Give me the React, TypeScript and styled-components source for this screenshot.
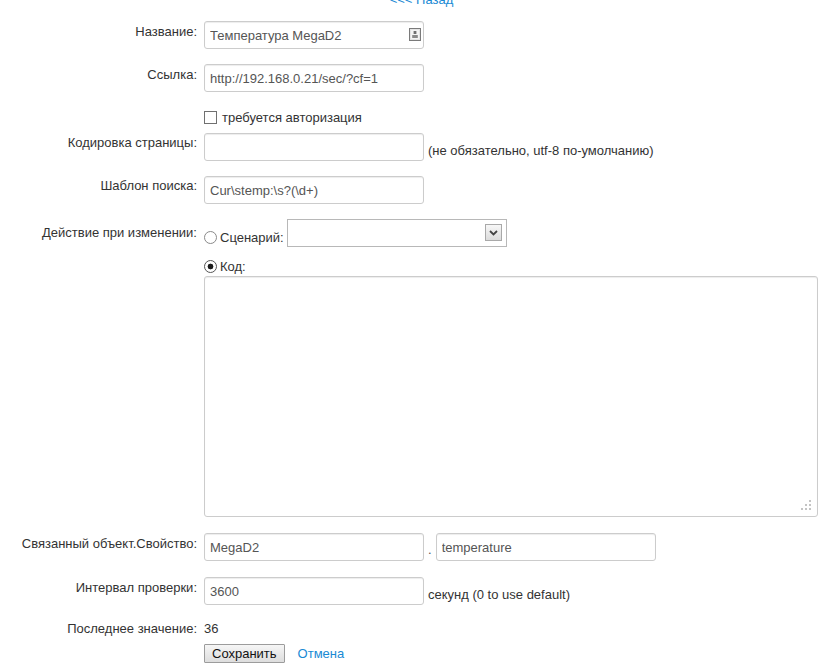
import React from 'react';
import styled, { createGlobalStyle } from 'styled-components';

const GlobalStyle = createGlobalStyle`
  html, body {
    margin: 0;
    padding: 0;
    background: #fff;
  }
  body {
    font-family: 'Liberation Sans', Arial, sans-serif;
    font-size: 13px;
    color: #333;
    overflow: hidden;
  }
`;

const Page = styled.div`
  width: 826px;
  display: flex;
  flex-direction: column;
`;

// ссылка "назад" сверху, частично обрезана краем окна
const BackBar = styled.div`
  margin-top: -9px;
  height: 18px;
  line-height: 18px;
  padding-left: 17px;
  text-align: center;
`;

const Link = styled.a`
  color: #1a8ad4;
  text-decoration: none;
  cursor: pointer;
`;

const Row = styled.div<{ $top: number }>`
  display: grid;
  grid-template-columns: 197px auto;
  column-gap: 7px;
  margin-top: ${(p) => p.$top}px;
`;

const Label = styled.div<{ $pad?: number }>`
  text-align: right;
  line-height: 19px;
  white-space: nowrap;
  padding-top: ${(p) => p.$pad ?? 0}px;
  color: #333;
`;

const Controls = styled.div`
  display: flex;
  flex-direction: column;
  align-items: flex-start;
`;

const Line = styled.div<{ $gap?: number; $top?: number }>`
  display: flex;
  align-items: flex-end;
  gap: ${(p) => p.$gap ?? 4}px;
  margin-top: ${(p) => p.$top ?? 0}px;
`;

const FieldBox = styled.div`
  position: relative;
`;

const TextInput = styled.input<{ $h?: number }>`
  box-sizing: border-box;
  width: 220px;
  height: ${(p) => p.$h ?? 28}px;
  margin: 0;
  padding: 0 5px;
  border: 1px solid #ccc;
  border-radius: 3px;
  box-shadow: inset 0 1px 1px rgba(0, 0, 0, 0.075);
  background: #fff;
  font-family: 'Liberation Sans', Arial, sans-serif;
  font-size: 13px;
  color: #555;
  outline: none;
`;

const FieldIcon = styled.span`
  position: absolute;
  right: 3px;
  top: 7px;
  width: 12px;
  height: 13px;
  display: flex;
  pointer-events: none;
`;

const Hint = styled.span`
  line-height: 19px;
  margin-bottom: 1px;
  white-space: nowrap;
  color: #333;
`;

const Dot = styled.span`
  line-height: 19px;
  margin-bottom: 2px;
  color: #555;
`;

const Check = styled.input`
  appearance: none;
  box-sizing: border-box;
  width: 13px;
  height: 13px;
  margin: 0;
  border: 1px solid #707070;
  background: #fff;
`;

const Radio = styled.input`
  appearance: none;
  box-sizing: border-box;
  width: 13px;
  height: 13px;
  margin: 0;
  border: 1px solid #8a8a8a;
  border-radius: 50%;
  background: #fff;

  &:checked {
    background: radial-gradient(circle, #1a1a1a 0 2.6px, #fff 3.2px);
    border-color: #555;
  }
`;

const OptionLabel = styled.label<{ $gap: number }>`
  display: flex;
  align-items: center;
  gap: ${(p) => p.$gap}px;
  height: 19px;
  line-height: 19px;
  white-space: nowrap;
  color: #333;
`;

const SelectBox = styled.div`
  position: relative;
  width: 220px;
  height: 28px;
`;

const Select = styled.select`
  appearance: none;
  box-sizing: border-box;
  width: 100%;
  height: 100%;
  margin: 0;
  padding: 0 4px;
  border: 1px solid #b8b8b8;
  border-radius: 0;
  background: #fff;
  font-family: 'Liberation Sans', Arial, sans-serif;
  font-size: 13px;
  color: #555;
  outline: none;
`;

const SelectArrow = styled.span`
  position: absolute;
  right: 5px;
  top: 5px;
  box-sizing: border-box;
  width: 17px;
  height: 17px;
  border: 1px solid #a9a9a9;
  background: linear-gradient(#f7f7f7, #dcdcdc);
  display: flex;
  align-items: center;
  justify-content: center;
  pointer-events: none;
`;

const CodeBox = styled.div`
  position: relative;
`;

const CodeArea = styled.textarea`
  display: block;
  box-sizing: border-box;
  width: 614px;
  height: 241px;
  margin: 0;
  padding: 4px 5px;
  border: 1px solid #ccc;
  border-radius: 3px;
  box-shadow: inset 0 1px 1px rgba(0, 0, 0, 0.075);
  font-family: 'Liberation Sans', Arial, sans-serif;
  font-size: 13px;
  color: #555;
  resize: none;
  outline: none;
`;

const Grip = styled.span`
  position: absolute;
  right: 6px;
  bottom: 5px;
  width: 12px;
  height: 12px;
  display: flex;
  pointer-events: none;
`;

const Value = styled.span`
  line-height: 19px;
  color: #333;
`;

const SaveButton = styled.button`
  box-sizing: border-box;
  height: 19px;
  margin: 0;
  padding: 0 7px;
  border: 1px solid #9c9c9c;
  border-radius: 1px;
  background: linear-gradient(#f6f6f6, #dddddd);
  font-family: 'Liberation Sans', Arial, sans-serif;
  font-size: 13px;
  line-height: 17px;
  color: #111;
  cursor: pointer;
`;

const ActionLine = styled.div`
  display: flex;
  align-items: center;
  gap: 13px;
`;

const PersonIcon = () => (
  <svg width="12" height="13" viewBox="0 0 12 13">
    <rect x="0.5" y="0.5" width="11" height="12" fill="#e4e4e4" stroke="#7a7a7a" />
    <rect x="2" y="2" width="8" height="9" fill="#f4f4f4" />
    <rect x="4.6" y="3" width="2.8" height="3" fill="#707070" />
    <rect x="3.2" y="7" width="5.6" height="3" fill="#8a8a8a" />
  </svg>
);

const ChevronIcon = () => (
  <svg width="9" height="6" viewBox="0 0 9 6">
    <path d="M1 1 L4.5 4.5 L8 1" fill="none" stroke="#444" strokeWidth="1.8" />
  </svg>
);

const GripIcon = () => (
  <svg width="12" height="12" viewBox="0 0 12 12">
    {[
      [9, 0],
      [5, 4],
      [9, 4],
      [1, 8],
      [5, 8],
      [9, 8],
    ].map(([x, y]) => (
      <rect key={`${x}-${y}`} x={x} y={y} width="2" height="2" fill="#c4c4c4" />
    ))}
  </svg>
);

const App: React.FC = () => {
  return (
    <Page>
      <GlobalStyle />
      <BackBar>
        <Link>&lt;&lt;&lt; Назад</Link>
      </BackBar>

      <Row $top={12}>
        <Label $pad={1}>Название:</Label>
        <Controls>
          <FieldBox>
            <TextInput defaultValue="Температура MegaD2" />
            <FieldIcon>
              <PersonIcon />
            </FieldIcon>
          </FieldBox>
        </Controls>
      </Row>

      <Row $top={15}>
        <Label $pad={1}>Ссылка:</Label>
        <Controls>
          <TextInput defaultValue="http://192.168.0.21/sec/?cf=1" />
        </Controls>
      </Row>

      <Row $top={16}>
        <Label />
        <Controls>
          <OptionLabel $gap={5}>
            <Check type="checkbox" />
            требуется авторизация
          </OptionLabel>
        </Controls>
      </Row>

      <Row $top={6}>
        <Label>Кодировка страницы:</Label>
        <Controls>
          <Line>
            <TextInput />
            <Hint>(не обязательно, utf-8 по-умолчанию)</Hint>
          </Line>
        </Controls>
      </Row>

      <Row $top={15}>
        <Label>Шаблон поиска:</Label>
        <Controls>
          <TextInput defaultValue={'Cur\\stemp:\\s?(\\d+)'} />
        </Controls>
      </Row>

      <Row $top={15}>
        <Label $pad={4}>Действие при изменении:</Label>
        <Controls>
          <Line $gap={3}>
            <OptionLabel $gap={3}>
              <Radio type="radio" name="action" />
              Сценарий:
            </OptionLabel>
            <SelectBox>
              <Select defaultValue="">
                <option value=""></option>
              </Select>
              <SelectArrow>
                <ChevronIcon />
              </SelectArrow>
            </SelectBox>
          </Line>
          <Line $top={10}>
            <OptionLabel $gap={3}>
              <Radio type="radio" name="action" defaultChecked />
              Код:
            </OptionLabel>
          </Line>
          <CodeBox>
            <CodeArea />
            <Grip>
              <GripIcon />
            </Grip>
          </CodeBox>
        </Controls>
      </Row>

      <Row $top={16}>
        <Label $pad={1}>Связанный объект.Свойство:</Label>
        <Controls>
          <Line>
            <TextInput defaultValue="MegaD2" />
            <Dot>.</Dot>
            <TextInput defaultValue="temperature" />
          </Line>
        </Controls>
      </Row>

      <Row $top={16}>
        <Label $pad={1}>Интервал проверки:</Label>
        <Controls>
          <Line>
            <TextInput defaultValue="3600" />
            <Hint>секунд (0 to use default)</Hint>
          </Line>
        </Controls>
      </Row>

      <Row $top={14}>
        <Label>Последнее значение:</Label>
        <Controls>
          <Value>36</Value>
        </Controls>
      </Row>

      <Row $top={6}>
        <Label />
        <Controls>
          <ActionLine>
            <SaveButton>Сохранить</SaveButton>
            <Link>Отмена</Link>
          </ActionLine>
        </Controls>
      </Row>
    </Page>
  );
};

export default App;
